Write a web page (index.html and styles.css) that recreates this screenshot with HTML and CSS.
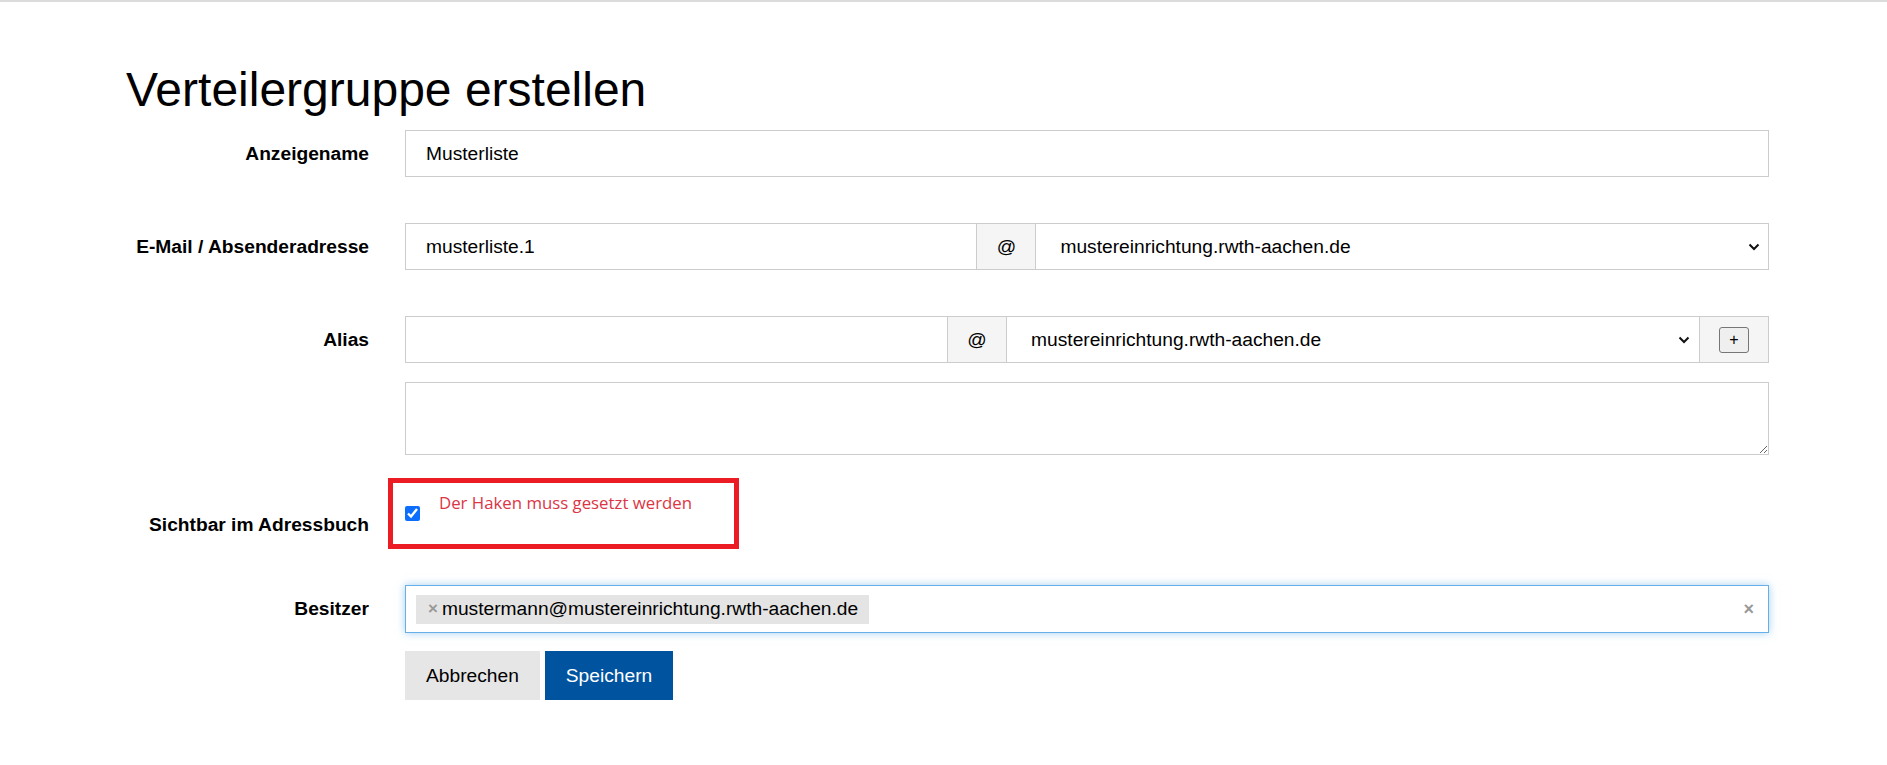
FILE: index.html
```html
<!DOCTYPE html>
<html lang="de">
<head>
    <meta charset="UTF-8">
    <meta name="viewport" content="width=device-width, initial-scale=1.0">
    <title>Verteilergruppe erstellen</title>
    <link rel="stylesheet" href="styles.css">
</head>
<body>
    <div class="container">
        <h1 class="page-title">Verteilergruppe erstellen</h1>

        <form class="group-form">
            <!-- Anzeigename -->
            <div class="form-row">
                <label class="form-label" for="displayname">Anzeigename</label>
                <div class="form-field">
                    <input type="text" id="displayname" class="form-input" value="Musterliste">
                </div>
            </div>

            <!-- E-Mail -->
            <div class="form-row">
                <label class="form-label" for="mail">E-Mail / Absenderadresse</label>
                <div class="form-field input-group">
                    <input type="text" id="mail" class="form-input group-input" value="musterliste.1">
                    <span class="group-addon">@</span>
                    <div class="select-wrap">
                        <select class="form-select">
                            <option>mustereinrichtung.rwth-aachen.de</option>
                        </select>
                        <svg class="select-arrow" width="12" height="8" viewBox="0 0 12 8"><path d="M1.5 1.5l4.5 4.5 4.5-4.5" fill="none" stroke="#111" stroke-width="2"/></svg>
                    </div>
                </div>
            </div>

            <!-- Alias -->
            <div class="form-row alias-row">
                <label class="form-label" for="alias">Alias</label>
                <div class="form-field">
                    <div class="input-group">
                        <input type="text" id="alias" class="form-input group-input" value="">
                        <span class="group-addon">@</span>
                        <div class="select-wrap">
                            <select class="form-select">
                                <option>mustereinrichtung.rwth-aachen.de</option>
                            </select>
                            <svg class="select-arrow" width="12" height="8" viewBox="0 0 12 8"><path d="M1.5 1.5l4.5 4.5 4.5-4.5" fill="none" stroke="#111" stroke-width="2"/></svg>
                        </div>
                        <span class="group-addon add-cell"><button type="button" class="add-btn">+</button></span>
                    </div>
                    <textarea class="alias-list"></textarea>
                </div>
            </div>

            <!-- Adressbuch -->
            <div class="form-row check-row">
                <label class="form-label" for="visible">Sichtbar im Adressbuch</label>
                <div class="form-field check-field">
                    <input type="checkbox" id="visible" class="check-input" checked>
                    <span class="check-error">Der Haken muss gesetzt werden</span>
                    <div class="annotation"></div>
                </div>
            </div>

            <!-- Besitzer -->
            <div class="form-row owner-row">
                <label class="form-label">Besitzer</label>
                <div class="form-field">
                    <div class="tag-field">
                        <span class="tag"><span class="tag-remove">×</span>mustermann@mustereinrichtung.rwth-aachen.de</span>
                        <span class="tag-clear">×</span>
                    </div>
                </div>
            </div>

            <div class="form-actions">
                <button type="button" class="btn btn-default">Abbrechen</button>
                <button type="button" class="btn btn-primary">Speichern</button>
            </div>
        </form>
    </div>
</body>
</html>
```

FILE: styles.css
```css
body {
    margin: 0;
    border-top: 2px solid #dcdcdc;
    background: #fff;
    color: #000;
    font-family: "Liberation Sans", Arial, sans-serif;
    font-size: 19.2px;
}

.container {
    width: 1643px;
    margin-left: 126px;
}

.page-title {
    margin: 60px 0 12px;
    font-size: 48px;
    font-weight: normal;
    line-height: 56px;
}

.form-row {
    display: grid;
    grid-template-columns: 243px 1fr;
    column-gap: 36px;
    margin-bottom: 46px;
}

.form-label {
    display: flex;
    align-items: center;
    justify-content: flex-end;
    height: 47px;
    font-weight: bold;
    text-align: right;
}

.form-input,
.form-select {
    box-sizing: border-box;
    width: 100%;
    height: 47px;
    padding: 0 20px;
    border: 1px solid #ccc;
    background: #fff;
    color: #000;
    font: inherit;
    outline: none;
}

.input-group {
    display: flex;
}

.input-group .group-input {
    flex: 42 1 0;
    min-width: 0;
    border-right: 0;
}

.group-addon {
    display: flex;
    align-items: center;
    justify-content: center;
    box-sizing: border-box;
    flex: 0 0 60px;
    height: 47px;
    border: 1px solid #ccc;
    background: #f5f5f5;
}

.select-wrap {
    position: relative;
    flex: 58 1 0;
    min-width: 0;
}

.form-select {
    appearance: none;
    -webkit-appearance: none;
    padding: 0 40px 0 24px;
    border-left: 0;
}

.alias-row .form-select {
    border-right: 0;
}

.select-arrow {
    position: absolute;
    top: 20px;
    right: 9px;
    pointer-events: none;
}

.add-cell {
    flex-basis: 70px;
}

.add-btn {
    box-sizing: border-box;
    width: 30px;
    height: 26px;
    padding: 0;
    border: 1px solid #767676;
    border-radius: 3px;
    background: #efefef;
    color: #000;
    font-family: "Liberation Sans", Arial, sans-serif;
    font-size: 16px;
    line-height: 22px;
}

.alias-row {
    margin-bottom: 20px;
}

.alias-list {
    display: block;
    box-sizing: border-box;
    width: 100%;
    height: 73px;
    margin-top: 19px;
    border: 1px solid #ccc;
    font: inherit;
    resize: vertical;
    outline: none;
}

.check-row {
    height: 100px;
    margin-bottom: 10px;
}

.check-row .form-label {
    align-self: center;
}

.check-field {
    position: relative;
    display: flex;
    align-items: flex-start;
    padding-top: 16px;
}

.check-input {
    width: 15px;
    height: 15px;
    margin: 15px 19px 0 0;
    accent-color: #0d6efd;
}

.check-error {
    color: #dc3545;
    font-family: "Open Sans", sans-serif;
    font-size: 16.8px;
    line-height: 23px;
}

.annotation {
    position: absolute;
    top: 3px;
    left: -17px;
    box-sizing: border-box;
    width: 351px;
    height: 71px;
    border: 5px solid #ec1c24;
}

.owner-row {
    margin-bottom: 18px;
}

.owner-row .form-label {
    height: 48px;
}

.tag-field {
    display: flex;
    align-items: center;
    box-sizing: border-box;
    height: 48px;
    padding: 0 14px 0 10px;
    border: 1px solid #66afe9;
    box-shadow: 0 0 8px rgba(102, 175, 233, 0.6);
}

.tag {
    display: flex;
    align-items: center;
    height: 29px;
    padding: 0 11px 0 12px;
    background: #e4e4e4;
}

.tag-remove {
    margin-right: 4px;
    color: #999;
    font-size: 17px;
    font-weight: bold;
}

.tag-clear {
    margin-left: auto;
    color: #999;
    font-size: 18px;
    font-weight: bold;
}

.form-actions {
    display: flex;
    gap: 5px;
    margin-left: 279px;
}

.btn {
    height: 49px;
    padding: 0 21px;
    border: 0;
    font: inherit;
    cursor: pointer;
}

.btn-default {
    background: #e6e6e6;
    color: #000;
}

.btn-primary {
    background: #00549f;
    color: #fff;
}
```
